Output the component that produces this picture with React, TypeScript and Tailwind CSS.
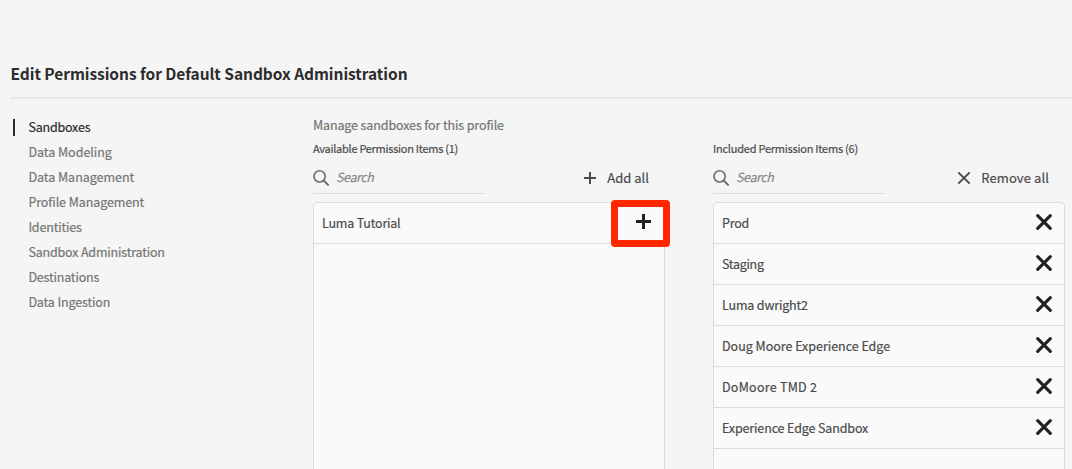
import React from "react";

const navItems = [
  { label: "Sandboxes", tracking: "tracking-[-0.2px]" },
  { label: "Data Modeling", tracking: "tracking-[-0.02px]" },
  { label: "Data Management", tracking: "tracking-[-0.02px]" },
  { label: "Profile Management", tracking: "tracking-[-0.09px]" },
  { label: "Identities", tracking: "tracking-[-0.18px]" },
  { label: "Sandbox Administration", tracking: "tracking-[-0.18px]" },
  { label: "Destinations", tracking: "tracking-[-0.18px]" },
  { label: "Data Ingestion", tracking: "tracking-[-0.13px]" },
];

const included = [
  { label: "Prod", tracking: "tracking-[-0.2px]" },
  { label: "Staging", tracking: "tracking-[-0.3px]" },
  { label: "Luma dwright2", tracking: "tracking-[-0.17px]" },
  { label: "Doug Moore Experience Edge", tracking: "tracking-[-0.02px]" },
  { label: "DoMoore TMD 2", tracking: "tracking-[0.25px]" },
  { label: "Experience Edge Sandbox", tracking: "tracking-[-0.13px]" },
];

function SearchField() {
  return (
    <div className="flex h-[32px] w-[172px] items-center border-b border-[#dcdcdc]">
      <svg width="16" height="16" viewBox="0 0 16 16" fill="none" stroke="#6e6e6e" className="mt-px shrink-0">
        <circle cx="6.6" cy="6.4" r="5.6" strokeWidth="1.6" />
        <path d="M10.6 10.4 15 14.8" strokeWidth="2" strokeLinecap="round" />
      </svg>
      <span className="-mt-px ml-[7px] text-[12.5px] leading-[16px] tracking-[-0.4px] text-[#868686] italic">
        Search
      </span>
    </div>
  );
}

function SmallPlus() {
  return (
    <svg width="12" height="12" viewBox="0 0 12 12" className="shrink-0">
      <path d="M6 0v12M0 6h12" stroke="#4b4b4b" strokeWidth="2" />
    </svg>
  );
}

function SmallCross() {
  return (
    <svg width="12" height="12" viewBox="0 0 12 12" className="shrink-0">
      <path d="M0.8 0.8 11.2 11.2M11.2 0.8 0.8 11.2" stroke="#4b4b4b" strokeWidth="1.9" strokeLinecap="round" />
    </svg>
  );
}

function RemoveIcon() {
  return (
    <svg width="16" height="16" viewBox="0 0 16 16" className="-mt-[3px] shrink-0">
      <path d="M1.7 1.7 14.3 14.3M14.3 1.7 1.7 14.3" stroke="#222222" strokeWidth="3.1" strokeLinecap="round" />
    </svg>
  );
}

function AddIcon() {
  return (
    <svg width="15" height="15" viewBox="0 0 15 15" className="-mt-[3px] mr-px shrink-0">
      <path d="M7.5 0v15M0 7.5h15" stroke="#222222" strokeWidth="3" />
    </svg>
  );
}

function Panel({
  title,
  titleTracking,
  action,
  actionTracking,
  icon,
  children,
}: {
  title: string;
  titleTracking: string;
  action: string;
  actionTracking: string;
  icon: React.ReactNode;
  children: React.ReactNode;
}) {
  return (
    <section className="flex w-[352px] shrink-0 flex-col">
      <h2 className={`mt-[5px] h-[20px] text-[11px] leading-[20px] text-[#4b4b4b] ${titleTracking}`}>{title}</h2>
      <div className="mt-[4px] flex items-center justify-between">
        <SearchField />
        <button
          className={`mr-[16px] flex items-center gap-[11px] text-[13px] leading-[20px] text-[#4b4b4b] ${actionTracking}`}
        >
          {icon}
          {action}
        </button>
      </div>
      <ul className="mt-[8px] h-[300px] rounded-[4px] border border-[#dcdcdc] bg-[#fafafa]">{children}</ul>
    </section>
  );
}

function Row({ label, tracking, children }: { label: string; tracking: string; children: React.ReactNode }) {
  return (
    <li className="flex h-[41px] items-center justify-between border-b border-[#dcdcdc] pr-[12px] pl-[8px] text-[12.5px] text-[#4b4b4b]">
      <span className={`leading-[20px] ${tracking}`}>{label}</span>
      {children}
    </li>
  );
}

export default function App() {
  return (
    <div className="flex h-[469px] w-[1072px] flex-col overflow-hidden bg-[#f5f5f5] font-['Noto_Sans_CJK_SC',sans-serif] [-webkit-text-stroke:0.2px]">
      <header className="ml-[10px] flex h-[99px] shrink-0 items-end border-b-2 border-[#e8e8e8] pb-[11px]">
        <h1 className="pl-[0.5px] text-[15.5px] leading-[26px] font-bold tracking-[-0.05px] whitespace-nowrap text-[#2c2c2c] [-webkit-text-stroke:0]">
          Edit Permissions for Default Sandbox Administration
        </h1>
      </header>
      <div className="flex">
        <nav className="mt-[16px] w-[313px] shrink-0 pl-[13px]">
          {navItems.map((item, i) => (
            <a
              key={item.label}
              className={`flex h-[25px] items-start text-[12.5px] leading-[20px] ${item.tracking} ${
                i === 0 ? "text-[#2c2c2c]" : "text-[#747474]"
              }`}
            >
              <span className={`mt-[4px] mr-[13.4px] h-[17px] w-[2px] ${i === 0 ? "bg-[#2c2c2c]" : ""}`} />
              <span className="mt-[2px]">{item.label}</span>
            </a>
          ))}
        </nav>
        <main className="flex flex-col pt-[16px]">
          <p className="h-[18px] text-[12.5px] leading-[20px] tracking-[-0.12px] text-[#747474]">
            Manage sandboxes for this profile
          </p>
          <div className="flex gap-[48px]">
            <Panel
              title="Available Permission Items (1)"
              titleTracking="tracking-[-0.27px]"
              action="Add all"
              actionTracking="tracking-[0px]"
              icon={<SmallPlus />}
            >
              <li className="relative">
                <ul>
                  <Row label="Luma Tutorial" tracking="tracking-[-0.2px]">
                    <AddIcon />
                  </Row>
                </ul>
                <div className="absolute -top-[3px] left-[297.4px] h-[46.6px] w-[59px] rounded-[4px] border-[7px] border-[#ff2600]" />
              </li>
            </Panel>
            <Panel
              title="Included Permission Items (6)"
              titleTracking="tracking-[-0.23px]"
              action="Remove all"
              actionTracking="tracking-[0.1px]"
              icon={<SmallCross />}
            >
              {included.map((item) => (
                <Row key={item.label} label={item.label} tracking={item.tracking}>
                  <RemoveIcon />
                </Row>
              ))}
            </Panel>
          </div>
        </main>
      </div>
    </div>
  );
}
